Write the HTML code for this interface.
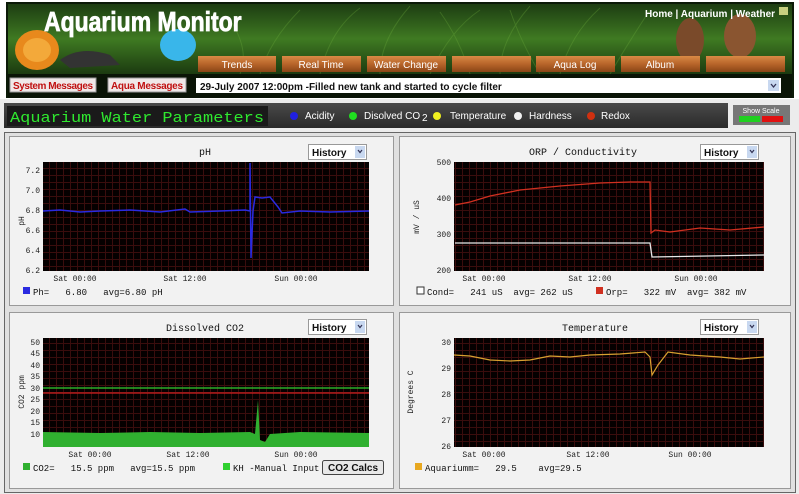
<!DOCTYPE html>
<html><head><meta charset="utf-8"><style>
html,body{margin:0;padding:0;background:#fff;width:799px;height:494px;overflow:hidden}
text{font-family:"Liberation Mono",monospace}
text.s,.s text{font-family:"Liberation Sans",sans-serif}
</style></head><body>
<svg width="799" height="494" viewBox="0 0 799 494" xmlns="http://www.w3.org/2000/svg">
<defs>
<pattern id="g" width="7" height="7" patternUnits="userSpaceOnUse">
<rect width="7" height="7" fill="#050000"/>
<path d="M0 0.5H7M0.5 0V7" stroke="#3a0d0d" stroke-width="1"/>
</pattern>
<linearGradient id="grass" x1="0" y1="0" x2="0" y2="1">
<stop offset="0" stop-color="#1d3d12"/><stop offset="0.5" stop-color="#3f7a22"/><stop offset="1" stop-color="#1c3a10"/>
</linearGradient>
<linearGradient id="btn" x1="0" y1="0" x2="0" y2="1">
<stop offset="0" stop-color="#d98a45"/><stop offset="0.5" stop-color="#b8652a"/><stop offset="1" stop-color="#8a4516"/>
</linearGradient>
<linearGradient id="bar" x1="0" y1="0" x2="0" y2="1">
<stop offset="0" stop-color="#4a4a4a"/><stop offset="1" stop-color="#2a2a2a"/>
</linearGradient>
</defs>
<rect x="0" y="0" width="799" height="99" fill="#fff"/>
<rect x="6" y="2" width="788" height="96" fill="#0c1a08"/>
<rect x="8" y="4" width="784" height="70" fill="url(#grass)"/>
<g stroke="#6fb040" stroke-width="1" opacity="0.3" fill="none">
<path d="M260 74Q270 40 300 10M320 74Q330 30 360 8M380 74Q380 40 410 6M430 74Q450 30 480 10M500 74Q500 40 530 6M560 74Q570 35 600 8M610 74Q630 40 650 10M240 74Q250 50 230 20M470 74Q460 40 440 12M540 74Q520 40 510 10"/>
</g>
<rect x="8" y="74" width="784" height="24" fill="#0a1406"/>
<ellipse cx="37" cy="50" rx="22" ry="20" fill="#e8891c"/>
<ellipse cx="37" cy="50" rx="14" ry="12" fill="#f3a93a"/>
<path d="M60 60Q80 45 110 55L120 65L70 68Z" fill="#333"/>
<ellipse cx="178" cy="45" rx="18" ry="16" fill="#39b6ea"/>
<ellipse cx="690" cy="40" rx="14" ry="22" fill="#7a4a2a"/>
<ellipse cx="740" cy="36" rx="16" ry="22" fill="#8a5530"/>
<text transform="translate(44,31) scale(0.82,1)" class="s" font-size="28" font-weight="bold" fill="#fff" stroke="#fff" stroke-width="0.8">Aquarium Monitor</text>
<text x="645" y="17" class="s" font-size="10" font-weight="bold" fill="#fff">Home | Aquarium | Weather</text>
<rect x="779" y="7" width="9" height="8" fill="#c8d080"/>
<g class="s" font-size="10" fill="#fff" text-anchor="middle">
<rect x="198" y="56" width="78" height="16" fill="url(#btn)"/><text x="237" y="68">Trends</text>
<rect x="282" y="56" width="79" height="16" fill="url(#btn)"/><text x="321" y="68">Real Time</text>
<rect x="367" y="56" width="79" height="16" fill="url(#btn)"/><text x="406" y="68">Water Change</text>
<rect x="452" y="56" width="79" height="16" fill="url(#btn)"/>
<rect x="536" y="56" width="79" height="16" fill="url(#btn)"/><text x="575" y="68">Aqua Log</text>
<rect x="621" y="56" width="79" height="16" fill="url(#btn)"/><text x="660" y="68">Album</text>
<rect x="706" y="56" width="79" height="16" fill="url(#btn)"/>
</g>
<rect x="10" y="78" width="86" height="14" fill="#f0e8e8" stroke="#999"/>
<text x="53" y="89" class="s" font-size="10" font-weight="bold" fill="#c01010" text-anchor="middle" textLength="80">System Messages</text>
<rect x="108" y="78" width="78" height="14" fill="#f0e8e8" stroke="#999"/>
<text x="147" y="89" class="s" font-size="10" font-weight="bold" fill="#c01010" text-anchor="middle" textLength="72">Aqua Messages</text>
<rect x="196" y="78" width="585" height="15" fill="#fff"/>
<text x="200" y="90" class="s" font-size="10" font-weight="bold" fill="#111">29-July 2007 12:00pm -Filled new tank and started to cycle filter</text>
<rect x="768" y="80" width="11" height="11" fill="#c8d8f0"/>
<path d="M771 84L773.5 87L776 84" stroke="#335" fill="none" stroke-width="1.3"/>
<rect x="0" y="99" width="799" height="395" fill="#ececec"/>
<rect x="4" y="103" width="724" height="25" fill="url(#bar)"/>
<rect x="7" y="106" width="261" height="20" fill="#1a1a1a"/>
<text x="10" y="122" font-size="15" fill="#2fe82f" textLength="254" lengthAdjust="spacingAndGlyphs">Aquarium Water Parameters</text>
<g class="s" font-size="10" fill="#fff">
<circle cx="294" cy="116" r="4" fill="#2020e0"/><text x="305" y="119">Acidity</text>
<circle cx="353" cy="116" r="4" fill="#20e020"/><text x="364" y="119">Disolved CO</text><text x="422" y="121" font-size="10">2</text>
<circle cx="437" cy="116" r="4" fill="#f0f020"/><text x="450" y="119">Temperature</text>
<circle cx="518" cy="116" r="4" fill="#f0f0f0"/><text x="529" y="119">Hardness</text>
<circle cx="591" cy="116" r="4" fill="#d03010"/><text x="601" y="119">Redox</text>
</g>
<rect x="733" y="105" width="57" height="20" fill="#777"/>
<text x="761" y="113" class="s" font-size="7" fill="#fff" text-anchor="middle">Show Scale</text>
<rect x="739" y="116" width="21" height="6" fill="#20d020"/><rect x="762" y="116" width="21" height="6" fill="#e01010"/>
<rect x="4.5" y="132.5" width="791" height="360" fill="#e0e0e0" stroke="#666"/>
<rect x="9.5" y="136.5" width="384" height="169" fill="#f2f2f2" stroke="#999"/>
<rect x="399.5" y="136.5" width="391" height="169" fill="#f2f2f2" stroke="#999"/>
<rect x="9.5" y="312.5" width="384" height="176" fill="#f2f2f2" stroke="#999"/>
<rect x="399.5" y="312.5" width="391" height="176" fill="#f2f2f2" stroke="#999"/>
<g class="s" font-size="10" font-weight="bold" fill="#111">
<rect x="308.5" y="144.5" width="58" height="15" fill="#fff" stroke="#999"/><text x="312" y="156">History</text>
<rect x="700.5" y="144.5" width="58" height="15" fill="#fff" stroke="#999"/><text x="704" y="156">History</text>
<rect x="308.5" y="319.5" width="58" height="15" fill="#fff" stroke="#999"/><text x="312" y="331">History</text>
<rect x="700.5" y="319.5" width="58" height="15" fill="#fff" stroke="#999"/><text x="704" y="331">History</text>
</g>
<g fill="#c8d8f0"><rect x="355" y="146" width="10" height="12"/><rect x="747" y="146" width="10" height="12"/><rect x="355" y="321" width="10" height="12"/><rect x="747" y="321" width="10" height="12"/></g>
<g stroke="#335" fill="none" stroke-width="1.2"><path d="M358 150L360 152.5L362 150M750 150L752 152.5L754 150M358 325L360 327.5L362 325M750 325L752 327.5L754 325"/></g>
<rect x="43" y="162" width="326" height="109" fill="url(#g)"/>
<rect x="454" y="162" width="310" height="109" fill="url(#g)"/>
<rect x="43" y="338" width="326" height="109" fill="url(#g)"/>
<rect x="454" y="338" width="310" height="109" fill="url(#g)"/>
<g font-size="10" fill="#111" text-anchor="middle">
<text x="205" y="155">pH</text>
<text x="583" y="155">ORP  /  Conductivity</text>
<text x="205" y="331">Dissolved CO2</text>
<text x="595" y="331">Temperature</text>
</g>
<g font-size="8" fill="#222" text-anchor="end">
<text x="40" y="173">7.2</text><text x="40" y="193">7.0</text><text x="40" y="213">6.8</text><text x="40" y="233">6.6</text><text x="40" y="253">6.4</text><text x="40" y="273">6.2</text>
<text x="451" y="165">500</text><text x="451" y="201">400</text><text x="451" y="237">300</text><text x="451" y="273">200</text>
<text x="40" y="345">50</text><text x="40" y="356">45</text><text x="40" y="368">40</text><text x="40" y="379">35</text><text x="40" y="391">30</text><text x="40" y="402">25</text><text x="40" y="414">20</text><text x="40" y="425">15</text><text x="40" y="437">10</text>
<text x="451" y="345">30</text><text x="451" y="371">29</text><text x="451" y="397">28</text><text x="451" y="423">27</text><text x="451" y="449">26</text>
</g>
<g font-size="8" fill="#222">
<text transform="translate(24,221) rotate(-90)" text-anchor="middle">pH</text>
<text transform="translate(419,217) rotate(-90)" text-anchor="middle">mV  /  uS</text>
<text transform="translate(24,392) rotate(-90)" text-anchor="middle">CO2 ppm</text>
<text transform="translate(413,392) rotate(-90)" text-anchor="middle">Degrees C</text>
</g>
<g font-size="8" fill="#222" text-anchor="middle">
<text x="75" y="281">Sat 00:00</text><text x="185" y="281">Sat 12:00</text><text x="296" y="281">Sun 00:00</text>
<text x="484" y="281">Sat 00:00</text><text x="590" y="281">Sat 12:00</text><text x="696" y="281">Sun 00:00</text>
<text x="90" y="457">Sat 00:00</text><text x="188" y="457">Sat 12:00</text><text x="296" y="457">Sun 00:00</text>
<text x="484" y="457">Sat 00:00</text><text x="588" y="457">Sat 12:00</text><text x="690" y="457">Sun 00:00</text>
</g>
<path d="M43 211L60 210L80 212L100 211L130 210L160 212L185 209L190 212L220 211L245 210L250 211L250 163L251 258L253 211L255 197L262 198L270 197L278 207L282 213L300 211L330 212L369 211" stroke="#2a2ae0" stroke-width="1.5" fill="none"/>
<path d="M455 205L470 202L490 196L520 190L560 186L600 183L630 182L650 182L651 233L655 230L670 232L700 228L730 230L764 227" stroke="#d03020" stroke-width="1.3" fill="none"/>
<path d="M455 243L650 243L652 257L764 255" stroke="#e8e8e8" stroke-width="1.3" fill="none"/>
<path d="M43 432L100 433L150 432L200 433L250 432L255 434L258 400L260 440L265 442L270 434L300 432L369 433L369 447L43 447Z" fill="#30b030"/>
<line x1="43" y1="388" x2="369" y2="388" stroke="#30d030" stroke-width="1.3"/>
<line x1="43" y1="393" x2="369" y2="393" stroke="#d02020" stroke-width="1.3"/>
<path d="M454 355L470 356L490 360L510 361L530 360L550 356L570 357L590 355L620 354L645 352L650 357L652 375L658 365L668 352L690 355L720 357L740 359L764 357" stroke="#d8a030" stroke-width="1.2" fill="none"/>
<g font-size="9" fill="#111">
<rect x="23" y="287" width="7" height="7" fill="#2a2ae0"/><text x="33" y="295" xml:space="preserve">Ph=   6.80   avg=6.80 pH</text>
<rect x="417" y="287" width="7" height="7" fill="#fff" stroke="#333"/><text x="427" y="295" xml:space="preserve">Cond=   241 uS  avg= 262 uS</text>
<rect x="596" y="287" width="7" height="7" fill="#d03020"/><text x="606" y="295" xml:space="preserve">Orp=   322 mV  avg= 382 mV</text>
<rect x="23" y="463" width="7" height="7" fill="#30b030"/><text x="33" y="471" xml:space="preserve">CO2=   15.5 ppm   avg=15.5 ppm</text>
<rect x="223" y="463" width="7" height="7" fill="#30d030"/><text x="233" y="471">KH -Manual Input</text>
<rect x="415" y="463" width="7" height="7" fill="#e8a820"/><text x="425" y="471" xml:space="preserve">Aquariumm=   29.5    avg=29.5</text>
</g>
<rect x="322.5" y="460.5" width="61" height="14" rx="2" fill="#e8e8e8" stroke="#444"/>
<text x="353" y="471" class="s" font-size="10" font-weight="bold" fill="#111" text-anchor="middle">CO2 Calcs</text>
</svg>
</body></html>
